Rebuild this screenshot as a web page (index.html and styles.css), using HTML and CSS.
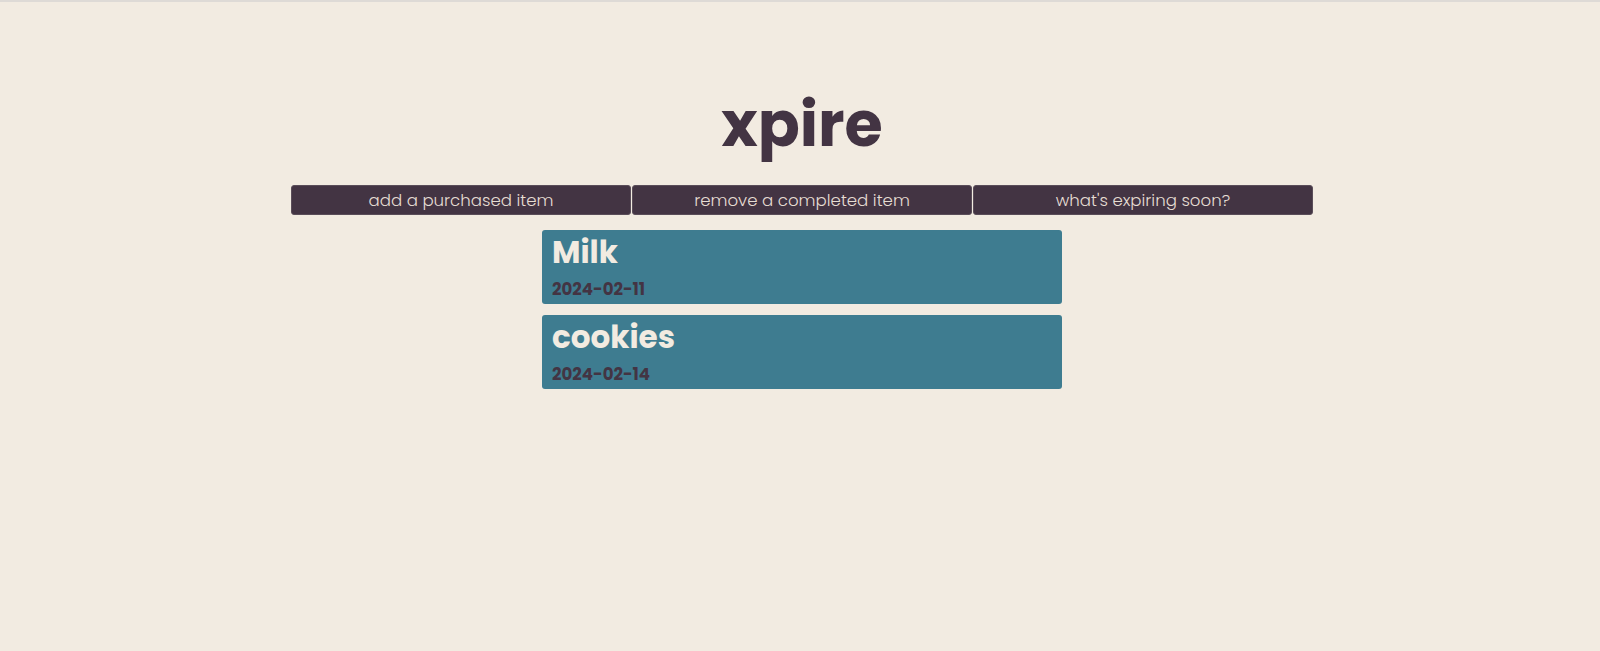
FILE: index.html
```html
<!DOCTYPE html>
<html lang="en">
<head>
<meta charset="utf-8">
<title>xpire</title>
<link rel="stylesheet" href="styles.css">
</head>
<body>
<div class="page">
  <h1 class="title">xpire</h1>
  <nav class="actions">
    <button class="action">add a purchased item</button>
    <button class="action">remove a completed item</button>
    <button class="action">what's expiring soon?</button>
  </nav>
  <main class="items">
    <div class="item">
      <h2 class="item-name">Milk</h2>
      <p class="item-date">2024-02-11</p>
    </div>
    <div class="item">
      <h2 class="item-name">cookies</h2>
      <p class="item-date">2024-02-14</p>
    </div>
  </main>
</div>
</body>
</html>
```

FILE: styles.css
```css
html, body {
  margin: 0;
  padding: 0;
}
body {
  background: #f2ebe1;
  border-top: 2px solid #dedad6;
  height: 649px;
  font-family: "Poppins", "Open Sans", sans-serif;
  color: #433443;
}
.page {
  display: flex;
  flex-direction: column;
  align-items: center;
  padding-left: 4px;
}
.title {
  margin: 83px 0 0;
  font-size: 62px;
  font-weight: 700;
  line-height: 80px;
  color: #433443;
}
.actions {
  display: flex;
  gap: 1px;
  width: 1022px;
  margin-top: 20px;
}
.action {
  flex: 1;
  height: 30px;
  background: #433443;
  color: #e6ddd3;
  border: 1px solid #5a4d59;
  border-radius: 3px;
  font-family: "Poppins", "Open Sans", sans-serif;
  font-size: 16.6px;
  font-weight: 300;
  padding: 0;
}
.items {
  display: flex;
  flex-direction: column;
  gap: 11px;
  margin-top: 15px;
}
.item {
  width: 520px;
  height: 74px;
  box-sizing: border-box;
  padding: 1px 10px 0;
  background: #3e7c90;
  border-radius: 3px;
}
.item-name {
  margin: 0;
  font-size: 31px;
  font-weight: 700;
  line-height: 42px;
  color: #f2ebe1;
}
.item-date {
  margin: 6px 0 0;
  font-size: 16.6px;
  font-weight: 700;
  line-height: 22px;
  color: #433443;
}
```
